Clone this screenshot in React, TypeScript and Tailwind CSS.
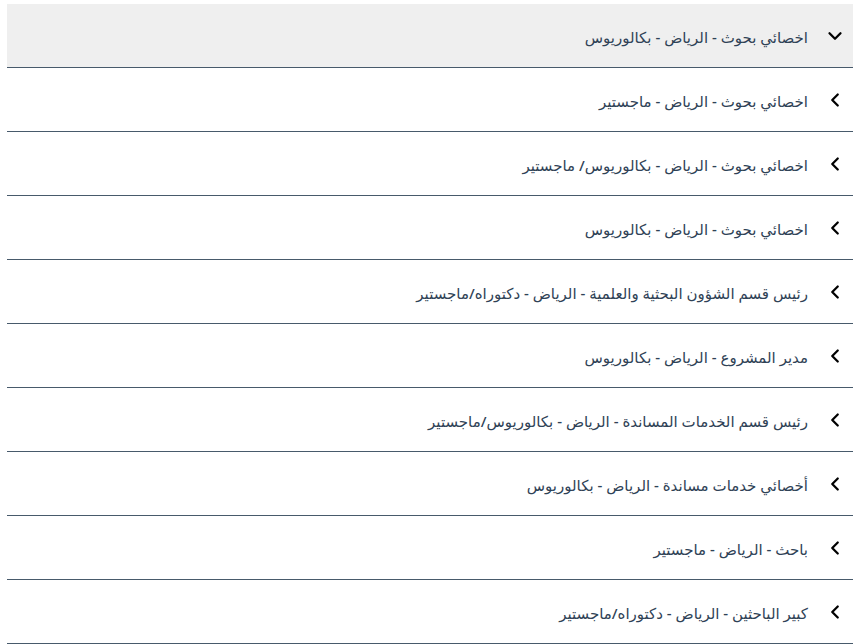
import { ChevronDown, ChevronLeft } from "lucide-react";

const jobs = [
  "اخصائي بحوث - الرياض - بكالوريوس",
  "اخصائي بحوث - الرياض - ماجستير",
  "اخصائي بحوث - الرياض - بكالوريوس/ ماجستير",
  "اخصائي بحوث - الرياض - بكالوريوس",
  "رئيس قسم الشؤون البحثية والعلمية - الرياض - دكتوراه/ماجستير",
  "مدير المشروع - الرياض - بكالوريوس",
  "رئيس قسم الخدمات المساندة - الرياض - بكالوريوس/ماجستير",
  "أخصائي خدمات مساندة - الرياض - بكالوريوس",
  "باحث - الرياض - ماجستير",
  "كبير الباحثين - الرياض - دكتوراه/ماجستير",
];

export default function App() {
  return (
    <div
      dir="rtl"
      className="bg-white min-h-screen pt-1 pl-[7px] pr-[10px]"
      style={{ fontFamily: '"Noto Sans", "DejaVu Sans", sans-serif' }}
    >
      {jobs.map((job, i) => (
        <div key={i} className="border-b border-[#475a6b]">
          <button
            className={`w-full h-[63px] flex items-center gap-[16px] pr-[7px] text-right ${
              i === 0 ? "bg-[#efefef]" : "bg-white"
            }`}
          >
            {i === 0 ? (
              <ChevronDown className="w-[22px] h-[22px] text-black" strokeWidth={2.5} />
            ) : (
              <ChevronLeft className="w-[22px] h-[22px] text-black" strokeWidth={2.5} />
            )}
            <span className="mt-[3px] text-[15px] font-medium text-[#2f4256]">{job}</span>
          </button>
        </div>
      ))}
    </div>
  );
}
